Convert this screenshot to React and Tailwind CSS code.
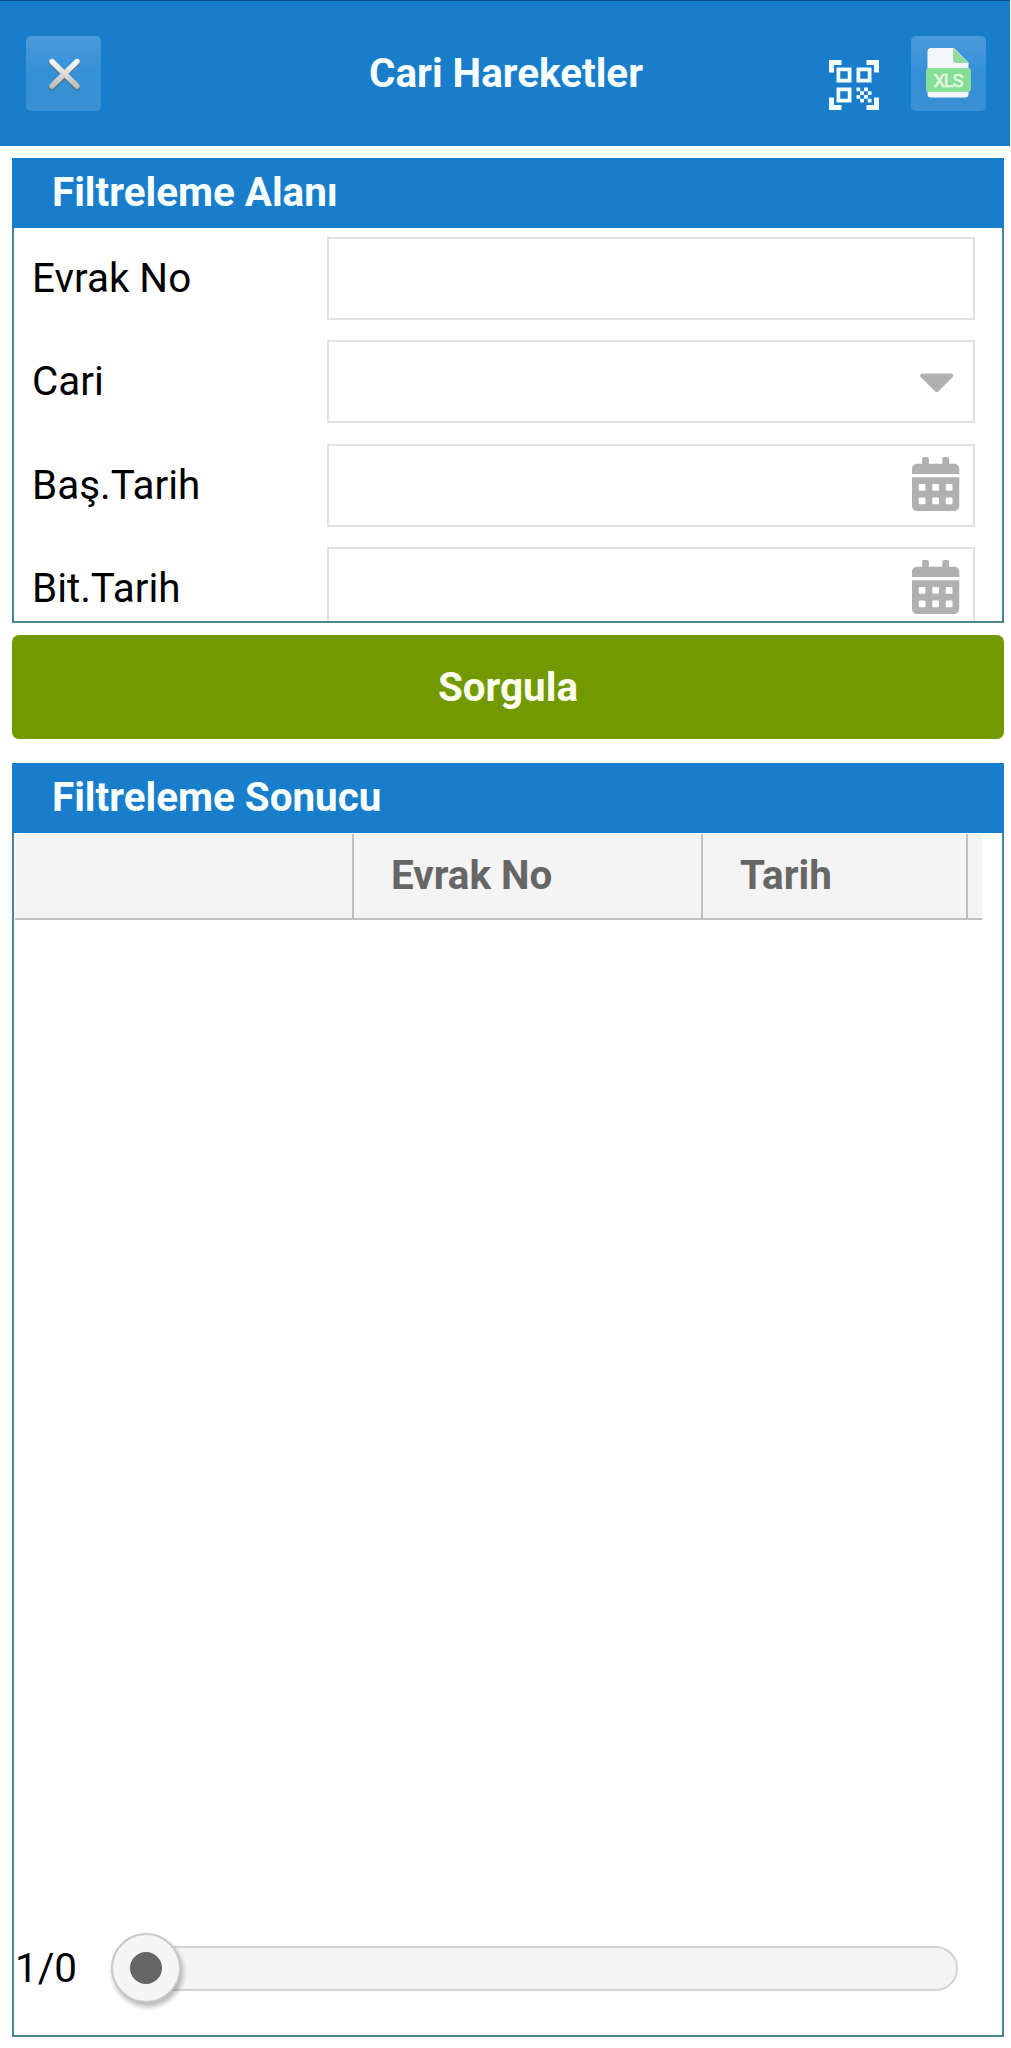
import React from "react";
import { FaCalendarAlt, FaCaretDown } from "react-icons/fa";
import { MdQrCodeScanner } from "react-icons/md";

function CloseIcon() {
  return (
    <svg width="40" height="40" viewBox="0 0 40 40" fill="none" strokeLinecap="round">
      <defs>
        <linearGradient id="cross" x1="0" y1="5" x2="0" y2="35" gradientUnits="userSpaceOnUse">
          <stop offset="0" stopColor="#ffffff" />
          <stop offset="1" stopColor="#b9bab4" />
        </linearGradient>
      </defs>
      <path d="M8 9.500 33 34.500M33 9.500 8 34.500" stroke="#5d6a70" strokeOpacity=".65" strokeWidth="6.500" />
      <path d="M8 8.500 33 33M33 8.500 8 33" stroke="url(#cross)" strokeWidth="5.400" />
    </svg>
  );
}

function XlsIcon() {
  return (
    <svg width="46" height="54" viewBox="0 0 46 54">
      <path d="M5 2h23l14.500 14.500V48a3.500 3.500 0 0 1-3.500 3.500H5A3.500 3.500 0 0 1 1.500 48V5.500A3.500 3.500 0 0 1 5 2z" fill="#f4f7fa" />
      <path d="M27 2l15.500 15H30a3 3 0 0 1-3-3z" fill="#8fdc9c" />
      <rect x="0" y="22" width="45" height="24" rx="3" fill="#86de96" />
      <text x="22.500" y="40.500" textAnchor="middle" fontFamily="Roboto, sans-serif" fontSize="18.500" fill="#e8fbe9" stroke="#e8fbe9" strokeWidth=".4" textLength="30">XLS</text>
    </svg>
  );
}

function GlossButton({ label, children }) {
  return (
    <button
      aria-label={label}
      className="flex h-[75px] w-[75px] items-center justify-center rounded-[5px] bg-linear-to-b from-[#4a9ada] from-0% via-[#3490d6] via-50% to-[#3a90d2] to-100%"
    >
      {children}
    </button>
  );
}

function PanelTitle({ children }) {
  return (
    <h2 className="h-[69.500px] shrink-0 bg-[#187dcb] pl-[40px] text-[40.400px] leading-[70px] font-bold text-[#f8ffff]">{children}</h2>
  );
}

function Field({ label, icon }) {
  return (
    <div className="mb-[20.500px] flex h-[83px] items-center pr-[27.500px] pl-[18px]">
      <span className="w-[295px] pt-[2px] text-[40.400px] leading-none">{label}</span>
      <div className="flex h-full flex-1 items-center justify-end border-2 border-[#e1e1e1] bg-white text-[#b0b0b0]">
        {icon}
      </div>
    </div>
  );
}

export default function App() {
  const calendar = <FaCalendarAlt className="mr-[13px] mb-[3px] h-[54px] w-[47.250px]" />;
  return (
    <div className="flex h-[2048px] w-[1011px] flex-col bg-[#fefffe] font-['Roboto',sans-serif] text-black">
      <header className="flex h-[145.500px] w-[1010px] shrink-0 border-t border-[#0a4c86] bg-[#187dcb] pr-[24px] pl-[26px]">
        <div className="mt-[34.500px]">
          <GlossButton label="Kapat">
            <CloseIcon />
          </GlossButton>
        </div>
        <h1 className="mt-[45px] flex-1 pl-[87px] text-center text-[40.400px] leading-[56px] font-bold text-[#f8ffff]">Cari Hareketler</h1>
        <MdQrCodeScanner className="mt-[54px] mr-[27px] h-[60px] w-[60px] text-[#f4feff]" />
        <div className="mt-[34.500px]">
          <GlossButton label="XLS">
            <XlsIcon />
          </GlossButton>
        </div>
      </header>

      <section className="mt-[12.500px] ml-[12px] flex h-[464.500px] w-[992px] shrink-0 flex-col overflow-hidden">
        <PanelTitle>Filtreleme Alanı</PanelTitle>
        <div className="flex-1 overflow-hidden border-2 border-t-0 border-[#4b8591] pt-[9px]">
          <Field label="Evrak No" />
          <Field label="Cari" icon={<FaCaretDown className="mr-[18.500px] mb-[2px] h-[57px] w-[35.500px]" />} />
          <Field label="Baş.Tarih" icon={calendar} />
          <Field label="Bit.Tarih" icon={calendar} />
        </div>
      </section>

      <button className="mt-[12.500px] ml-[12px] h-[104px] w-[992px] shrink-0 rounded-[7px] bg-[#739900] text-[40.400px] leading-[106px] font-bold text-[#fdffee]">
        Sorgula
      </button>

      <section className="mt-[24px] ml-[12px] flex h-[1274px] w-[992px] shrink-0 flex-col">
        <PanelTitle>Filtreleme Sonucu</PanelTitle>
        <div className="flex flex-1 flex-col justify-between border-2 border-t-0 border-[#4b8591]">
          <div className="mt-[1.500px] ml-px flex h-[85.500px] w-[967px] border-b-2 border-[#c0c0c0] bg-[#f4f4f4] text-[40.400px] leading-[83px] font-bold text-[#666]">
            <div className="w-[339px] border-r-2 border-[#c0c0c0]" />
            <div className="w-[349px] border-r-2 border-[#c0c0c0] pl-[37px]">Evrak No</div>
            <div className="w-[265px] border-r-2 border-[#c0c0c0] pl-[37px]">Tarih</div>
          </div>
          <div className="mb-[32px] flex h-[70px] items-center pl-px">
            <span className="w-[96px] pt-[2px] text-[40.400px] leading-none">1/0</span>
            <div className="flex h-[45px] w-[846.500px] items-center rounded-full border-2 border-[#d4d4d4] bg-[#f4f4f4]">
              <div className="ml-[-2px] flex h-[70px] w-[70px] shrink-0 items-center justify-center rounded-full border-2 border-[#c8c8c8] bg-[#f5f5f5] shadow-[2px_4px_5px_rgba(0,0,0,0.28)]">
                <div className="h-[32px] w-[32px] rounded-full bg-[#666]" />
              </div>
            </div>
          </div>
        </div>
      </section>
    </div>
  );
}
